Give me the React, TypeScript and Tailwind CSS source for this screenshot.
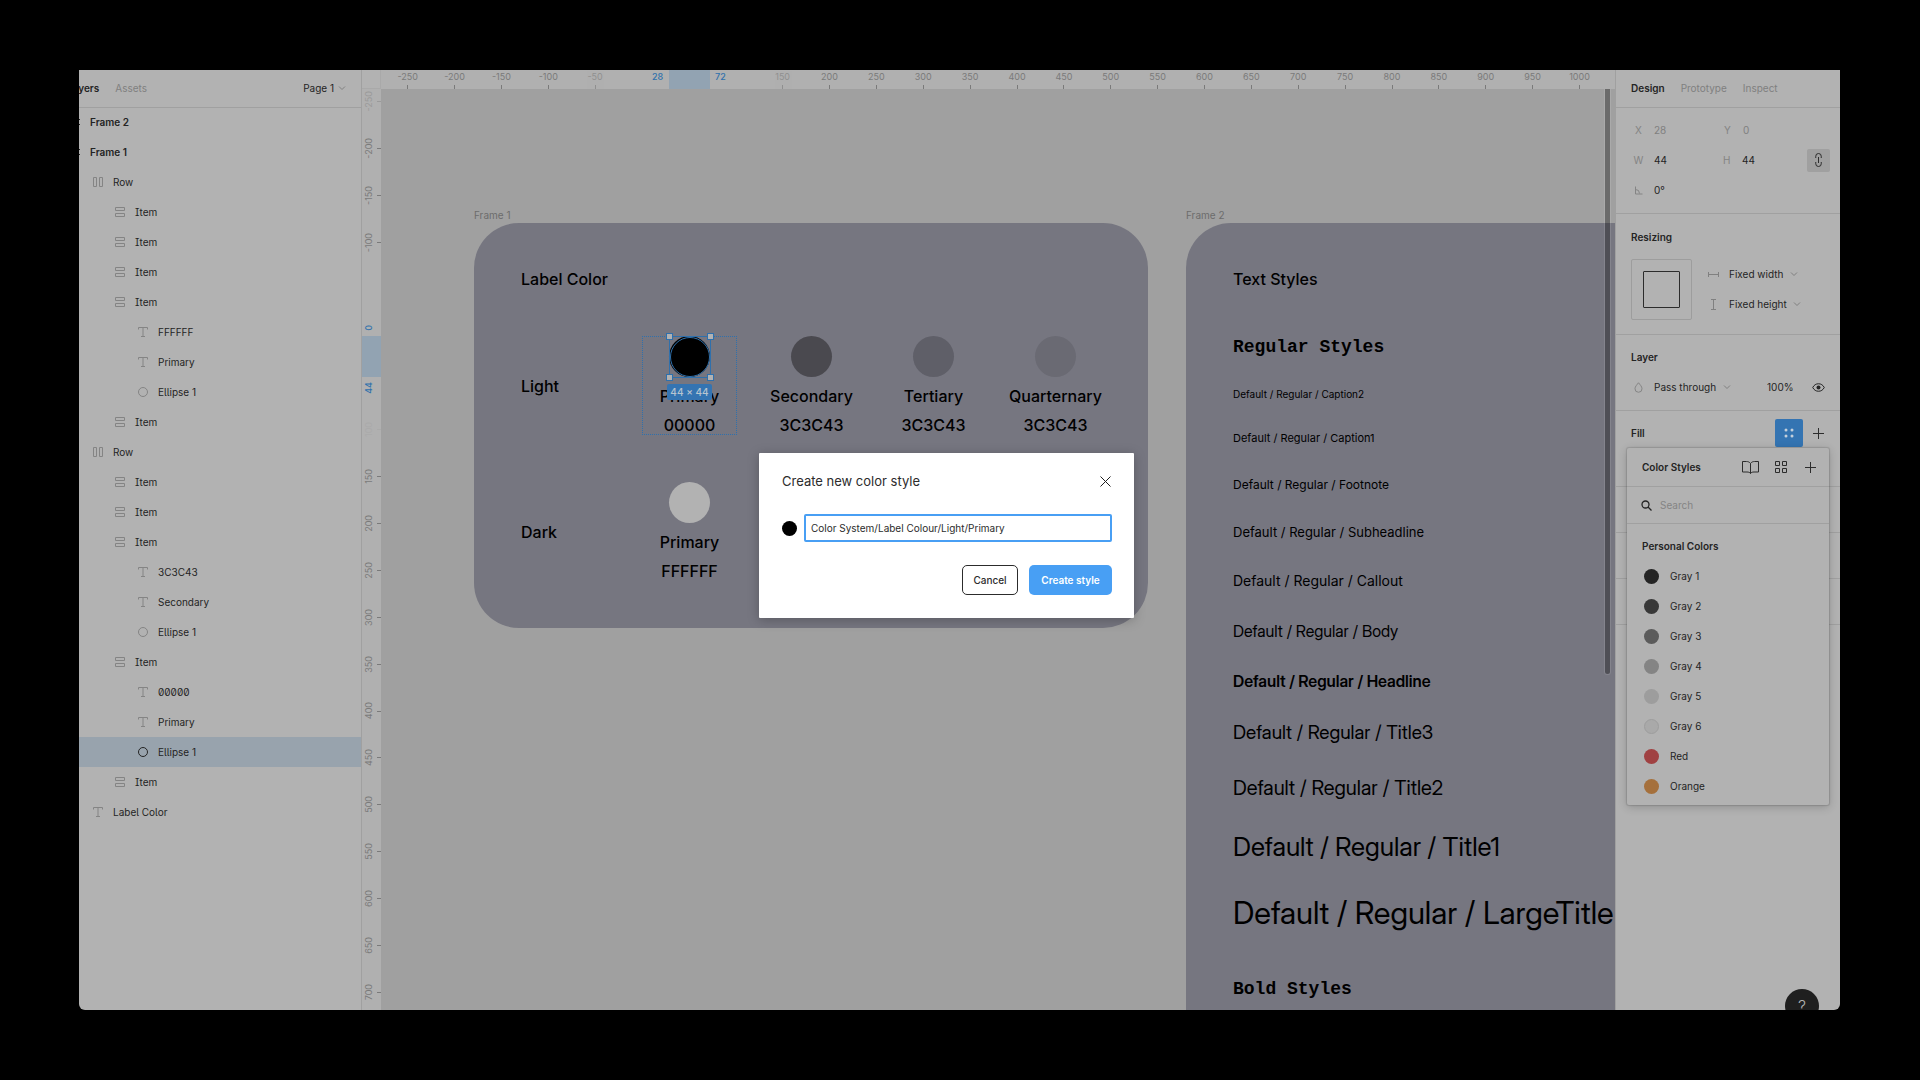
import { useState } from "react";
import type { ReactNode } from "react";
import clsx from "clsx";

// canvas zoom: one design unit in screen pixels
const SCALE = 0.9375;
const ORIGIN_X = 261;
const ORIGIN_Y = 247;

type LayerKind = "frame" | "row" | "item" | "text" | "ellipse";

const layers: { id: number; name: string; kind: LayerKind; depth: number }[] = [
  { id: 1, name: "Frame 2", kind: "frame", depth: 0 },
  { id: 2, name: "Frame 1", kind: "frame", depth: 0 },
  { id: 3, name: "Row", kind: "row", depth: 1 },
  { id: 4, name: "Item", kind: "item", depth: 2 },
  { id: 5, name: "Item", kind: "item", depth: 2 },
  { id: 6, name: "Item", kind: "item", depth: 2 },
  { id: 7, name: "Item", kind: "item", depth: 2 },
  { id: 8, name: "FFFFFF", kind: "text", depth: 3 },
  { id: 9, name: "Primary", kind: "text", depth: 3 },
  { id: 10, name: "Ellipse 1", kind: "ellipse", depth: 3 },
  { id: 11, name: "Item", kind: "item", depth: 2 },
  { id: 12, name: "Row", kind: "row", depth: 1 },
  { id: 13, name: "Item", kind: "item", depth: 2 },
  { id: 14, name: "Item", kind: "item", depth: 2 },
  { id: 15, name: "Item", kind: "item", depth: 2 },
  { id: 16, name: "3C3C43", kind: "text", depth: 3 },
  { id: 17, name: "Secondary", kind: "text", depth: 3 },
  { id: 18, name: "Ellipse 1", kind: "ellipse", depth: 3 },
  { id: 19, name: "Item", kind: "item", depth: 2 },
  { id: 20, name: "00000", kind: "text", depth: 3 },
  { id: 21, name: "Primary", kind: "text", depth: 3 },
  { id: 22, name: "Ellipse 1", kind: "ellipse", depth: 3 },
  { id: 23, name: "Item", kind: "item", depth: 2 },
  { id: 24, name: "Label Color", kind: "text", depth: 1 },
];

const indents = ["pl-0", "pl-[11px]", "pl-[33px]", "pl-[56px]"];

const rulerX = [-250, -200, -150, -100, -50, 150, 200, 250, 300, 350, 400, 450, 500, 550, 600, 650, 700, 750, 800, 850, 900, 950, 1000];
const rulerY = [-250, -200, -150, -100, 100, 150, 200, 250, 300, 350, 400, 450, 500, 550, 600, 650, 700];

const lightLabels = [
  { name: "Primary", hex: "00000", fill: "bg-black" },
  { name: "Secondary", hex: "3C3C43", fill: "bg-[#4a494f]" },
  { name: "Tertiary", hex: "3C3C43", fill: "bg-[#5f5f68]" },
  { name: "Quarternary", hex: "3C3C43", fill: "bg-[#6a6a73]" },
];

const darkLabels = [{ name: "Primary", hex: "FFFFFF", fill: "bg-[#b2b2b2]" }];

// small sizes use the text cut, larger ones the display cut
const textStyles = [
  { name: "Caption2", style: "text-[10px] leading-[12px]" },
  { name: "Caption1", style: "text-[11px] leading-[16px]" },
  { name: "Footnote", style: "text-[12px] leading-[17px]" },
  { name: "Subheadline", style: "text-[13px] leading-[18px]" },
  { name: "Callout", style: "text-[14px] leading-[20px]" },
  { name: "Body", style: "font-['Inter_Display','Inter',sans-serif] text-[16px] leading-[20px]" },
  { name: "Headline", style: "font-['Inter_Display','Inter',sans-serif] text-[16px] leading-[20px] font-semibold" },
  { name: "Title3", style: "font-['Inter_Display','Inter',sans-serif] text-[19px] leading-[24px]" },
  { name: "Title2", style: "font-['Inter_Display','Inter',sans-serif] text-[20px] leading-[26px]" },
  { name: "Title1", style: "font-['Inter_Display','Inter',sans-serif] text-[26px] leading-[32px]" },
  { name: "LargeTitle", style: "font-['Inter_Display','Inter',sans-serif] text-[31px] leading-[40px]" },
];

const colorStyles = [
  { name: "Gray 1", fill: "bg-[#242424]" },
  { name: "Gray 2", fill: "bg-[#383838]" },
  { name: "Gray 3", fill: "bg-[#5b5b5b]" },
  { name: "Gray 4", fill: "bg-[#848484]" },
  { name: "Gray 5", fill: "bg-[#9d9d9d]" },
  { name: "Gray 6", fill: "bg-[#a9a9a9] border border-[#9d9d9d]" },
  { name: "Red", fill: "bg-[#a04142]" },
  { name: "Orange", fill: "bg-[#a5703c]" },
];

function Chevron() {
  return (
    <svg width="8" height="6" viewBox="0 0 8 6" fill="none" stroke="#808080" aria-hidden="true">
      <path d="M1 1.5 4 4.5 7 1.5" />
    </svg>
  );
}

function Plus() {
  return (
    <svg width="11" height="11" viewBox="0 0 11 11" stroke="#2c2c2c" aria-hidden="true">
      <path d="M5.5 0v11M0 5.5h11" />
    </svg>
  );
}

function LayerIcon({ kind, active }: { kind: LayerKind; active?: boolean }) {
  const stroke = active || kind === "frame" ? "#242424" : "#848484";
  return (
    <svg width="16" height="16" viewBox="0 0 16 16" fill="none" stroke={stroke} className="shrink-0" aria-hidden="true">
      {kind === "frame" && <path d="M5.5 3v10M10.5 3v10M3 5.5h10M3 10.5h10" />}
      {kind === "row" && <path d="M3.5 3.5h3v9h-3zM9.5 3.5h3v9h-3z" />}
      {kind === "item" && <path d="M3.5 3.5h9v3h-9zM3.5 9.5h9v3h-9z" />}
      {kind === "text" && <path d="M3.5 5.5v-2h9v2M8 3.5v9M6 12.5h4" />}
      {kind === "ellipse" && <circle cx="8" cy="8" r="4.5" />}
    </svg>
  );
}

function LayersPanel() {
  const [selected, setSelected] = useState(22);

  return (
    <aside className="w-[283px] shrink-0 overflow-hidden border-r border-[#a0a0a0] bg-[#b2b2b2]">
      <div className="flex h-[37px] items-center pr-[15px] pb-0.5 shadow-[0_1px_0_#a0a0a0]">
        <button className="-ml-[12px] font-semibold">Layers</button>
        <button className="ml-4 text-[#808080]">Assets</button>
        <button className="ml-auto flex items-center gap-1">
          Page 1 <Chevron />
        </button>
      </div>
      <ul className="[font-feature-settings:'ss02']">
        {layers.map((layer) => (
          <li key={layer.id}>
            <button
              onClick={() => setSelected(layer.id)}
              className={clsx(
                "flex h-[30px] w-full items-center gap-[7px]",
                indents[layer.depth],
                layer.depth === 0 && "font-semibold",
                selected === layer.id && "bg-[#98a3ad]"
              )}
            >
              <span className={layer.depth === 0 ? "-ml-[12px]" : ""}>
                <LayerIcon kind={layer.kind} active={selected === layer.id} />
              </span>
              {layer.name}
            </button>
          </li>
        ))}
      </ul>
    </aside>
  );
}

function TopRuler() {
  return (
    <div className="relative h-[19px] overflow-hidden bg-[#b0b0b0] text-[9px] leading-[14px] text-[#7a7a7a]">
      {rulerX.map((v) => (
        <div
          key={v}
          className={clsx(
            "absolute top-0 flex h-full w-10 -translate-x-1/2 flex-col items-center justify-between",
            (v === -50 || v === 150) && "opacity-60"
          )}
          style={{ left: ORIGIN_X + v * SCALE }}
        >
          <span>{v}</span>
          <span className="h-1 w-px bg-[#7a7a7a]" />
        </div>
      ))}
      <div className="absolute inset-y-0 left-[288px] w-[41px] bg-[#92a3b2]" />
      <span className="absolute top-0 left-[271px] font-medium text-[#2f70ac]">28</span>
      <span className="absolute top-0 left-[334px] font-medium text-[#2f70ac]">72</span>
    </div>
  );
}

function SideRuler() {
  return (
    <div className="relative w-[19px] shrink-0 overflow-hidden bg-[#b0b0b0] text-[9px] leading-[14px] text-[#7a7a7a]">
      {rulerY.map((v) => (
        <div
          key={v}
          className={clsx(
            "absolute left-0 flex h-10 w-full -translate-y-1/2 items-center justify-between",
            v === -250 && "opacity-40",
            v === 100 && "opacity-10"
          )}
          style={{ top: ORIGIN_Y + v * SCALE }}
        >
          <span className="rotate-180 [writing-mode:vertical-rl]">{v}</span>
          <span className="h-px w-1 bg-[#7a7a7a]" />
        </div>
      ))}
      <div className="absolute inset-x-0 top-[247px] h-[41px] bg-[#92a3b2]" />
      <span className="absolute top-[236px] left-0 rotate-180 font-medium text-[#2f70ac] [writing-mode:vertical-rl]">0</span>
      <span className="absolute top-[293px] left-0 rotate-180 font-medium text-[#2f70ac] [writing-mode:vertical-rl]">44</span>
    </div>
  );
}

function Handle({ place }: { place: string }) {
  return <span className={clsx("absolute size-[7px] border border-[#2f70ac] bg-[#b2b2b2]", place)} />;
}

function Selection() {
  return (
    <>
      <div className="absolute inset-0 border border-dotted border-[#2f70ac]" />
      <div className="absolute top-0 left-[27px] size-[42px] border border-[#2f70ac]">
        <div className="size-full rounded-full border border-[#2f70ac]" />
        <Handle place="-top-1 -left-1" />
        <Handle place="-top-1 -right-1" />
        <Handle place="-bottom-1 -left-1" />
        <Handle place="-right-1 -bottom-1" />
      </div>
      <div className="absolute top-12 left-[25px] flex h-4 w-[45px] items-center justify-center rounded-xs bg-[#3474b2] text-[10px] font-medium text-[#b8c4d0]">
        44 × 44
      </div>
    </>
  );
}

function Swatches({ title, items, selected }: { title: string; items: typeof lightLabels; selected?: number }) {
  return (
    <div className="flex items-center">
      <span className="w-[121px] shrink-0">{title}</span>
      <div className="flex gap-[27px]">
        {items.map((item, i) => (
          <div key={item.name} className="relative flex w-[95px] shrink-0 flex-col items-center gap-[9px]">
            <span className={clsx("size-[41px] rounded-full", item.fill)} />
            <span>{item.name}</span>
            <span>{item.hex}</span>
            {selected === i && <Selection />}
          </div>
        ))}
      </div>
    </div>
  );
}

function Canvas() {
  return (
    <div className="relative flex-1 overflow-hidden bg-[#a0a0a0] text-black">
      <section className="absolute top-[118px] left-[93px]">
        <h2 className="h-4 text-[10px] leading-[16px] text-[#6c6c6c]">Frame 1</h2>
        <div className="flex w-[674px] flex-col gap-[47px] rounded-[45px] bg-[#767680] pt-[46px] pb-[47px] pl-[47px] text-[16px] leading-[20px] font-medium">
          <span>Label Color</span>
          <Swatches title="Light" items={lightLabels} selected={0} />
          <Swatches title="Dark" items={darkLabels} />
        </div>
      </section>

      <section className="absolute top-[118px] left-[805px]">
        <h2 className="h-4 text-[10px] leading-[16px] text-[#6c6c6c]">Frame 2</h2>
        <div className="flex w-[674px] flex-col rounded-[45px] bg-[#767680] px-[47px] pt-[46px] pb-40">
          <span className="text-[16px] leading-[20px] font-medium">Text Styles</span>
          <span className="mt-12 font-['Liberation_Mono',monospace] text-[18px] leading-[20px] font-bold">Regular Styles</span>
          <div className="mt-[31px] flex flex-col gap-[30px] whitespace-nowrap">
            {textStyles.map((t) => (
              <span key={t.name} className={t.style}>
                Default / Regular / {t.name}
              </span>
            ))}
          </div>
          <span className="mt-[46px] font-['Liberation_Mono',monospace] text-[18px] leading-[20px] font-bold">Bold Styles</span>
        </div>
      </section>

      {/* scroll thumb */}
      <div className="absolute top-0 right-[5px] h-[585px] w-[5px] rounded-b-full bg-black/33 ring-1 ring-white/10" />
    </div>
  );
}

function Field({ id, label, value, muted }: { id: string; label: ReactNode; value: string; muted?: boolean }) {
  return (
    <div className="flex h-[30px] w-[89px] items-center">
      <label htmlFor={id} className="flex w-[15px] justify-center text-[#848484]">
        {label}
      </label>
      <input
        id={id}
        defaultValue={value}
        className={clsx("ml-2 w-12 bg-transparent outline-none", muted && "text-[#808080]")}
      />
    </div>
  );
}

function Picker({ label, option }: { label: string; option: string }) {
  return (
    <span className="flex items-center gap-1.5">
      <select aria-label={label} className="appearance-none bg-transparent outline-none">
        <option>{option}</option>
      </select>
      <Chevron />
    </span>
  );
}

function ColorStyles() {
  return (
    <div className="absolute top-[378px] right-[11px] w-[202px] rounded-xs bg-[#b2b2b2] pb-1 shadow-[0_2px_10px_rgba(0,0,0,0.2),0_0_1px_1px_rgba(0,0,0,0.12)]">
      <div className="flex h-[38px] items-center pr-[13px] pl-[15px]">
        <h3 className="font-semibold">Color Styles</h3>
        <button aria-label="Libraries" className="ml-auto">
          <svg width="17" height="13" viewBox="0 0 17 13" fill="none" stroke="#2c2c2c">
            <path d="M8.5 2.5C7.5 1 6 .5 4.5.5h-4V11h4.5c1.7 0 2.8.4 3.5 1.5.7-1.1 1.8-1.5 3.5-1.5h4.5V.5h-4c-1.5 0-3 .5-4 2zM8.5 2.5v10" />
          </svg>
        </button>
        <button aria-label="Show as grid" className="ml-4">
          <svg width="12" height="12" viewBox="0 0 12 12" fill="none" stroke="#2c2c2c">
            <path d="M.5.5h4v4h-4zM7.5.5h4v4h-4zM.5 7.5h4v4h-4zM7.5 7.5h4v4h-4z" />
          </svg>
        </button>
        <button aria-label="New style" className="ml-[18px]">
          <Plus />
        </button>
      </div>
      <div className="flex h-[38px] items-center gap-2 border-y border-[#a0a0a0] pl-[14px]">
        <svg width="11" height="11" viewBox="0 0 11 11" fill="none" stroke="#242424" strokeWidth="1.3" aria-hidden="true">
          <circle cx="4.5" cy="4.5" r="3.5" />
          <path d="m7 7 3.5 3.5" />
        </svg>
        <input
          aria-label="Search styles"
          placeholder="Search"
          className="w-32 bg-transparent outline-none placeholder:text-[#848484]"
        />
      </div>
      <h4 className="mt-[7px] flex h-[30px] items-center pl-[15px] font-semibold">Personal Colors</h4>
      <ul>
        {colorStyles.map((c) => (
          <li key={c.name}>
            <button className="flex h-[30px] w-full items-center gap-[11px] pl-[17px]">
              <span className={clsx("size-[15px] rounded-full", c.fill)} />
              {c.name}
            </button>
          </li>
        ))}
      </ul>
    </div>
  );
}

function DesignPanel() {
  return (
    <aside className="relative w-[225px] shrink-0 overflow-hidden border-l border-[#a0a0a0] bg-[#b2b2b2]">
      <div className="flex h-[38px] items-center gap-4 border-b border-[#a0a0a0] pb-0.5 pl-[15px]">
        <button className="font-semibold">Design</button>
        <button className="text-[#808080]">Prototype</button>
        <button className="text-[#808080]">Inspect</button>
      </div>

      <section className="border-b border-[#a0a0a0] pt-[7px] pr-[10px] pb-2 pl-[15px]">
        <div className="flex">
          <Field id="x" label="X" value="28" muted />
          <Field id="y" label="Y" value="0" muted />
        </div>
        <div className="flex items-center">
          <Field id="w" label="W" value="44" />
          <Field id="h" label="H" value="44" />
          <button aria-label="Constrain proportions" className="ml-auto flex size-[23px] items-center justify-center rounded-xs bg-[#a0a0a0]">
            <svg width="7" height="14" viewBox="0 0 7 14" fill="none" stroke="#2c2c2c">
              <path d="M.75 5V3.25a2.75 2.75 0 0 1 5.5 0V5M.75 9v1.75a2.75 2.75 0 0 0 5.5 0V9M3.5 4v6" />
            </svg>
          </button>
        </div>
        <Field
          id="rotation"
          label={
            <svg width="9" height="9" viewBox="0 0 9 9" fill="none" stroke="#848484" aria-label="Rotation">
              <path d="M1.5.5V8h7M1.5 3.5a4 4 0 0 1 4 4" />
            </svg>
          }
          value="0°"
        />
      </section>

      <section className="border-b border-[#a0a0a0] pt-2 pb-[14px] pl-[15px]">
        <h3 className="flex h-[30px] items-center font-semibold">Resizing</h3>
        <div className="mt-[7px] flex">
          <div className="flex size-[61px] items-center justify-center rounded-xs border border-[#9d9d9d]">
            <div className="size-[37px] rounded-[1px] border border-[#2c2c2c]" />
          </div>
          <div className="ml-4 flex flex-col">
            <div className="flex h-[30px] items-center gap-[10px]">
              <svg width="11" height="11" viewBox="0 0 11 11" stroke="#808080" aria-hidden="true">
                <path d="M.5 3v5M10.5 3v5M.5 5.5h10" />
              </svg>
              <Picker label="Horizontal resizing" option="Fixed width" />
            </div>
            <div className="flex h-[30px] items-center gap-[10px]">
              <svg width="11" height="11" viewBox="0 0 11 11" stroke="#808080" aria-hidden="true">
                <path d="M3 .5h5M3 10.5h5M5.5.5v10" />
              </svg>
              <Picker label="Vertical resizing" option="Fixed height" />
            </div>
          </div>
        </div>
      </section>

      <section className="border-b border-[#a0a0a0] pt-[7px] pb-2 pl-[15px]">
        <h3 className="flex h-[30px] items-center font-semibold">Layer</h3>
        <div className="flex h-[30px] items-center pr-[15px]">
          <svg width="9" height="11" viewBox="0 0 9 11" fill="none" stroke="#848484" className="mr-[11px] ml-[3px]" aria-hidden="true">
            <path d="M4.5.75C3 2.75 1 4.5 1 6.75a3.5 3.5 0 0 0 7 0C8 4.5 6 2.75 4.5.75z" />
          </svg>
          <Picker label="Blend mode" option="Pass through" />
          <input aria-label="Opacity" defaultValue="100%" className="ml-auto w-8 bg-transparent outline-none" />
          <button aria-label="Toggle visibility" className="ml-[13px]">
            <svg width="13" height="9" viewBox="0 0 13 9" fill="none" stroke="#242424">
              <path d="M.75 4.5C2 2 4 .75 6.5.75S11 2 12.25 4.5C11 7 9 8.25 6.5 8.25S2 7 .75 4.5z" />
              <circle cx="6.5" cy="4.5" r="2" fill="#242424" stroke="none" />
            </svg>
          </button>
        </div>
      </section>

      <section className="h-[76px] border-b border-[#a0a0a0] pt-[7px] pr-4 pl-[15px]">
        <div className="flex h-[30px] items-center">
          <h3 className="font-semibold">Fill</h3>
          <button aria-label="Color styles" className="ml-auto flex size-7 items-center justify-center rounded-xs bg-[#3474b2]">
            <svg width="10" height="10" viewBox="0 0 10 10" fill="#c4d0dc">
              <circle cx="2" cy="2" r="1.5" />
              <circle cx="8" cy="2" r="1.5" />
              <circle cx="2" cy="8" r="1.5" />
              <circle cx="8" cy="8" r="1.5" />
            </svg>
          </button>
          <button aria-label="Add fill" className="ml-[10px]">
            <Plus />
          </button>
        </div>
      </section>
      <div className="h-[46px] border-b border-[#a0a0a0]" />
      <div className="h-[46px] border-b border-[#a0a0a0]" />
      <div className="h-[46px] border-b border-[#a0a0a0]" />

      <ColorStyles />

      <button aria-label="Help" className="absolute right-[21px] -bottom-[13px] flex size-[34px] items-center justify-center rounded-full bg-[#1f1f1f] text-[16px] font-light text-[#b2b2b2]">
        ?
      </button>
    </aside>
  );
}

function CreateStyleDialog() {
  const [name, setName] = useState("Color System/Label Colour/Light/Primary");

  return (
    <div
      role="dialog"
      aria-labelledby="dialog-title"
      className="absolute top-[383px] left-[680px] w-[375px] rounded-[1px] bg-white pt-[18px] pr-[22px] pb-[23px] pl-[23px] text-[#2c2c2c] shadow-[0_2px_12px_rgba(0,0,0,0.25)]"
    >
      <div className="flex h-5 items-center justify-between">
        <h2 id="dialog-title" className="text-[13px]">Create new color style</h2>
        <button aria-label="Close" className="mr-px">
          <svg width="11" height="11" viewBox="0 0 11 11" stroke="#1f1f1f">
            <path d="m.5.5 10 10M10.5.5l-10 10" />
          </svg>
        </button>
      </div>
      <div className="mt-[23px] flex items-center gap-[7px]">
        <span className="size-[15px] rounded-full bg-black" />
        <input
          aria-label="Style name"
          value={name}
          onChange={(e) => setName(e.target.value)}
          className="h-7 min-w-0 flex-1 rounded-xs border-2 border-[#489ff4] px-[5px] outline-none"
        />
      </div>
      <div className="mt-[23px] flex justify-end gap-[11px]">
        <button className="h-[30px] w-14 rounded-[5px] border border-[#2c2c2c] font-medium">Cancel</button>
        <button className="h-[30px] w-[83px] rounded-[5px] bg-[#489ff4] font-semibold text-white">Create style</button>
      </div>
    </div>
  );
}

export default function App() {
  return (
    <div className="h-screen bg-black py-[70px] pr-20 pl-[79px] font-['Inter',sans-serif] text-[10px] leading-[16px] text-[#242424]">
      <div className="relative flex h-full overflow-hidden rounded-b-md">
        <LayersPanel />
        <main className="flex min-w-0 flex-1 flex-col">
          <div className="flex">
            <div className="h-[19px] w-[19px] shrink-0 border-r border-b border-[#a9a9a9] bg-[#b2b2b2]" />
            <div className="min-w-0 flex-1">
              <TopRuler />
            </div>
          </div>
          <div className="flex min-h-0 flex-1">
            <SideRuler />
            <Canvas />
          </div>
        </main>
        <DesignPanel />
        <CreateStyleDialog />
      </div>
    </div>
  );
}
